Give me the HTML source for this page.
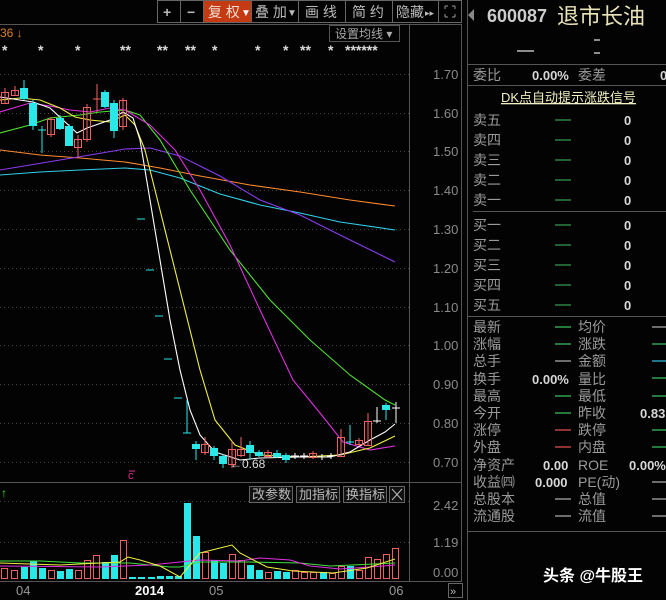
<!DOCTYPE html>
<html><head><meta charset="utf-8"><style>
html,body{margin:0;padding:0;background:#000;width:666px;height:600px;overflow:hidden}
svg{display:block}
text{font-family:"Liberation Sans","Noto Sans CJK SC",sans-serif}
.cj{font-family:"Liberation Sans","Noto Sans CJK SC",sans-serif;font-size:14px;fill:#9a9a9a}
.ax{font-size:13px;fill:#8a8a8a}
.bv{font-size:13px;fill:#d8d8d8;font-weight:bold}
</style></head><body>
<svg width="666" height="600" viewBox="0 0 666 600" xmlns="http://www.w3.org/2000/svg">
<rect width="666" height="600" fill="#030303"/>
<g stroke="#666" fill="none">
<rect x="157.5" y="0.5" width="304" height="22"/>
<line x1="180.5" y1="0" x2="180.5" y2="22"/><line x1="203.5" y1="0" x2="203.5" y2="22"/>
<line x1="251.5" y1="0" x2="251.5" y2="22"/><line x1="298.5" y1="0" x2="298.5" y2="22"/>
<line x1="345.5" y1="0" x2="345.5" y2="22"/><line x1="392.5" y1="0" x2="392.5" y2="22"/>
<line x1="438.5" y1="0" x2="438.5" y2="22"/>
</g>
<rect x="204" y="1" width="47" height="21" fill="#c43a12"/>
<g font-size="14" fill="#bbb">
<text x="163" y="17" font-weight="bold">+</text><text x="187" y="17" font-weight="bold">−</text>
<text x="208" y="17" class="cj" style="fill:#f0e0d8">复 权</text><text x="241" y="16" fill="#fff" font-size="10">▼</text>
<text x="255" y="17" class="cj" style="fill:#bbb">叠 加</text><text x="287" y="16" font-size="10">▼</text>
<text x="305" y="17" class="cj" style="fill:#bbb">画 线</text>
<text x="352" y="17" class="cj" style="fill:#bbb">简 约</text>
<text x="396" y="17" class="cj" style="fill:#bbb">隐藏</text><text x="425" y="16" font-size="9">▸▸</text>
</g>
<g stroke="#999" fill="none"><path d="M445 6h3M445 6v3M455 6h-3M455 6v3M445 17h3M445 17v-3M455 17h-3M455 17v-3"/></g>
<g stroke="#555" fill="none">
<line x1="0" y1="24.5" x2="462" y2="24.5"/>
<line x1="409.5" y1="24" x2="409.5" y2="582"/>
<line x1="461.5" y1="24" x2="461.5" y2="582"/>
<line x1="0" y1="482.5" x2="462" y2="482.5"/>
<line x1="0" y1="581.5" x2="462" y2="581.5"/>
<line x1="467.5" y1="0" x2="467.5" y2="600"/>
</g>
<text x="0" y="37" font-size="12" fill="#e08020">36 ↓</text>
<rect x="329.5" y="25.5" width="70" height="16" fill="none" stroke="#555"/>
<text x="335" y="38" class="cj" style="font-size:12px;fill:#aaa">设置均线 ▾</text>
<g font-size="14" fill="#ddd" font-weight="bold">
<text x="2" y="55">*</text><text x="38" y="55">*</text><text x="75" y="55">*</text><text x="120" y="55">**</text><text x="157" y="55">**</text><text x="185" y="55">**</text><text x="212" y="55">*</text><text x="255" y="55">*</text><text x="283" y="55">*</text><text x="300" y="55">**</text><text x="328" y="55">*</text><text x="345" y="55">******</text>
</g>
<g stroke="#444" stroke-dasharray="1,3">
<line x1="0" y1="74.5" x2="409" y2="74.5"/><line x1="0" y1="113.5" x2="409" y2="113.5"/><line x1="0" y1="151.5" x2="409" y2="151.5"/><line x1="0" y1="190.5" x2="409" y2="190.5"/><line x1="0" y1="229.5" x2="409" y2="229.5"/><line x1="0" y1="268.5" x2="409" y2="268.5"/><line x1="0" y1="307.5" x2="409" y2="307.5"/><line x1="0" y1="345.5" x2="409" y2="345.5"/><line x1="0" y1="384.5" x2="409" y2="384.5"/><line x1="0" y1="423.5" x2="409" y2="423.5"/><line x1="0" y1="462.5" x2="409" y2="462.5"/>
<line x1="0" y1="501.5" x2="409" y2="501.5"/><line x1="0" y1="542.5" x2="409" y2="542.5"/>
</g>
<g class="ax">
<text x="433" y="79">1.70</text><text x="433" y="118">1.60</text><text x="433" y="156">1.50</text><text x="433" y="195">1.40</text><text x="433" y="234">1.30</text><text x="433" y="273">1.20</text><text x="433" y="312">1.10</text><text x="433" y="350">1.00</text><text x="433" y="389">0.90</text><text x="433" y="428">0.80</text><text x="433" y="467">0.70</text>
<text x="433" y="510">2.42</text><text x="433" y="547">1.19</text><text x="433" y="577">0.00</text>
</g>
<g fill="none" stroke-width="1.1">
<polyline stroke="#ff8a30" points="0,150 40,155 80,158 125,162 160,168 200,176 250,185 300,192 350,200 395,206"/>
<polyline stroke="#30d0e8" points="0,175 40,172 80,170 125,168 150,170 180,178 220,194 260,205 300,213 340,222 395,230"/>
<polyline stroke="#8a3cf0" points="0,170 30,165 60,160 90,155 125,149 150,148 180,156 220,176 260,200 300,215 340,235 395,262"/>
<polyline stroke="#50e030" points="0,133 30,125 50,118 80,115 100,112 125,110 140,115 160,140 190,190 230,250 270,300 310,340 350,375 385,400 395,405"/>
<polyline stroke="#e030e0" points="0,112 30,103 50,106 70,110 90,112 110,108 125,110 150,125 175,150 200,190 230,245 260,310 293,380 320,413 343,442 370,450 395,446"/>
<polyline stroke="#f0f040" points="0,100 20,98 40,100 60,108 75,117 90,120 110,122 125,115 135,125 145,150 160,210 175,270 185,310 200,370 215,420 235,445 260,455 300,457 340,455 370,448 395,436"/>
<polyline stroke="#ffffff" points="0,97 33,102 50,108 77,133 87,128 110,120 123,112 133,118 140,140 150,200 160,260 170,320 180,370 190,410 200,435 215,452 240,460 260,458 300,457 330,457 350,452 370,440 385,432 395,424"/>
</g>
<g stroke="#f06060" fill="none">
<path d="M5 88v15M15 86v10M51 117v20M78 135v22M87 104v38M97 84v28M123 98v32M205 437v18M232 441v27M241 437v20M268 450v8M313 451v8M341 429v27M359 438v8M368 413v32"/>
<rect x="1.5" y="92.5" width="7" height="11"/><rect x="11.5" y="90.5" width="7" height="5"/><rect x="47.5" y="119.5" width="7" height="15"/><rect x="74.5" y="139.5" width="7" height="8"/><rect x="83.5" y="107.5" width="7" height="32"/><rect x="119.5" y="100.5" width="7" height="26"/>
<rect x="201.5" y="444.5" width="7" height="8"/><rect x="228.5" y="449.5" width="7" height="15"/><rect x="237.5" y="449.5" width="7" height="6"/><rect x="264.5" y="452.5" width="7" height="4"/><rect x="309.5" y="453.5" width="7" height="4"/><rect x="337.5" y="437.5" width="7" height="19"/><rect x="355.5" y="440.5" width="7" height="4"/><rect x="364.5" y="421.5" width="7" height="24"/>
<path d="M93 99h8"/>
</g>
<g stroke="#2ae8e8" fill="#2ae8e8">
<path d="M24 80v20M33 100v30M42 126v27M60 115v15M69 124v22M105 90v18M114 100v38M187 400v33M196 441v19M214 446v14M223 454v14M250 441v19M259 450v7M277 450v8M286 453v10M350 425v20M386 403v17" fill="none"/>
<rect x="20.5" y="88.5" width="7" height="10"/><rect x="29.5" y="103.5" width="7" height="22"/><rect x="56.5" y="118.5" width="7" height="10"/><rect x="65.5" y="126.5" width="7" height="19"/><rect x="101.5" y="92.5" width="7" height="14"/><rect x="110.5" y="103.5" width="7" height="27"/>
<rect x="192.5" y="444.5" width="7" height="4"/><rect x="210.5" y="448.5" width="7" height="7"/><rect x="219.5" y="456.5" width="7" height="7"/><rect x="246.5" y="445.5" width="7" height="7"/><rect x="255.5" y="452.5" width="7" height="3"/><rect x="273.5" y="453.5" width="7" height="3"/><rect x="282.5" y="455.5" width="7" height="4"/><rect x="382.5" y="405.5" width="7" height="4"/>
<path d="M38 130h8M137 219h8M146 270h8M155 316h8M164 359h8M174 398h8M183 433h8M346 442h8" fill="none"/>
</g>
<g stroke="#fff" fill="none"><path d="M291 456h8M295 453v6M300 456h8M304 453v6M318 457h8M322 454v6M327 456h8M331 453v6M373 421h8M377 407v16M392 408h8M396 402v21"/></g>
<text x="230" y="468" font-size="12" fill="#ddd">←0.68</text>
<text x="128" y="479" font-size="11" fill="#e03090">c</text><path d="M129 471h6" stroke="#e03090"/>
<g stroke="#666" fill="#111"><rect x="249.5" y="486.5" width="43" height="16"/><rect x="296.5" y="486.5" width="43" height="16"/><rect x="343.5" y="486.5" width="43" height="16"/><rect x="389.5" y="486.5" width="15" height="16"/></g>
<g class="cj" style="font-size:13px;fill:#bbb"><text x="252" y="499">改参数</text><text x="299" y="499">加指标</text><text x="346" y="499">换指标</text></g>
<path d="M392 489l10 11M402 489l-10 11" stroke="#bbb"/>
<text x="1" y="497" font-size="12" fill="#30e030">↑</text>
<g stroke="#f06060" fill="none">
<rect x="1.5" y="568.5" width="6" height="10"/><rect x="11.5" y="570.5" width="6" height="8"/><rect x="48.5" y="570.5" width="6" height="8"/><rect x="75.5" y="570.5" width="6" height="8"/><rect x="84.5" y="560.5" width="6" height="18"/><rect x="93.5" y="555.5" width="6" height="23"/><rect x="120.5" y="540.5" width="6" height="38"/><rect x="202.5" y="552.5" width="6" height="26"/><rect x="229.5" y="554.5" width="6" height="24"/><rect x="238.5" y="560.5" width="6" height="18"/><rect x="265.5" y="572.5" width="6" height="6"/><rect x="292.5" y="570.5" width="6" height="8"/><rect x="301.5" y="572.5" width="6" height="6"/><rect x="310.5" y="572.5" width="6" height="6"/><rect x="329.5" y="573.5" width="6" height="5"/><rect x="338.5" y="566.5" width="6" height="12"/><rect x="356.5" y="570.5" width="6" height="8"/><rect x="365.5" y="557.5" width="6" height="21"/><rect x="374.5" y="559.5" width="6" height="19"/><rect x="383.5" y="554.5" width="6" height="24"/><rect x="392.5" y="548.5" width="6" height="30"/>
</g>
<g fill="#2ae8e8">
<rect x="21" y="567" width="7" height="12"/><rect x="30" y="561" width="7" height="18"/><rect x="39" y="568" width="7" height="11"/><rect x="57" y="571" width="7" height="8"/><rect x="66" y="569" width="7" height="10"/><rect x="102" y="562" width="7" height="17"/><rect x="111" y="555" width="7" height="24"/><rect x="129" y="577" width="7" height="2"/><rect x="138" y="577" width="7" height="2"/><rect x="148" y="577" width="7" height="2"/><rect x="157" y="576" width="7" height="3"/><rect x="166" y="576" width="7" height="3"/><rect x="175" y="576" width="7" height="3"/><rect x="184" y="503" width="7" height="76"/><rect x="193" y="536" width="7" height="43"/><rect x="211" y="560" width="7" height="19"/><rect x="220" y="563" width="7" height="16"/><rect x="247" y="565" width="7" height="14"/><rect x="256" y="570" width="7" height="9"/><rect x="274" y="571" width="7" height="8"/><rect x="283" y="572" width="7" height="7"/><rect x="320" y="572" width="7" height="7"/><rect x="347" y="566" width="7" height="13"/>
</g>
<g fill="none" stroke-width="1">
<polyline stroke="#40e040" points="0,561 40,561 80,563 130,563 170,567 180,567 200,562 250,562 300,563 330,566 395,563"/>
<polyline stroke="#e030e0" points="0,566 100,567 150,565 180,562 200,560 240,561 260,558 290,560 310,566 340,569 370,567 395,565"/>
<polyline stroke="#f0f040" points="0,563 60,565 120,562 128,557 140,560 160,566 180,577 200,553 232,545 240,553 267,567 293,571 333,573 367,568 395,559"/>
</g>
<g font-size="13" fill="#999"><text x="16" y="595">04</text><text x="135" y="595" fill="#fff" font-weight="bold">2014</text><text x="209" y="595">05</text><text x="389" y="595">06</text></g>
<rect x="448.5" y="583.5" width="14" height="14" fill="none" stroke="#666"/><text x="450" y="595" font-size="11" fill="#bbb">»</text>
<path d="M474 9v12l-6-6z" fill="#888"/>
<text x="487" y="22" font-size="18" font-weight="bold" fill="#ccc">600087</text>
<text x="557" y="24" class="cj" style="font-size:22px;fill:#e8e2b8">退市长油</text>
<path d="M517 51h17M594 40h6M594 53h6" stroke="#ddd" stroke-width="1.3"/>
<g stroke="#555"><line x1="468" y1="64.5" x2="666" y2="64.5"/><line x1="468" y1="85.5" x2="666" y2="85.5"/><line x1="473" y1="211.5" x2="666" y2="211.5"/><line x1="468" y1="316.5" x2="666" y2="316.5"/><line x1="468" y1="531.5" x2="666" y2="531.5"/></g>
<text x="473" y="80" class="cj">委比</text><text x="532" y="80" class="bv">0.00%</text><text x="578" y="80" class="cj">委差</text><text x="660" y="80" class="bv">0</text>
<text x="501" y="102" class="cj" style="font-size:13px;fill:#f0f0c0;text-decoration:underline">DK点自动提示涨跌信号</text>
<g class="cj"><text x="473" y="125">卖五</text><text x="473" y="145">卖四</text><text x="473" y="165">卖三</text><text x="473" y="185">卖二</text><text x="473" y="205">卖一</text><text x="473" y="230">买一</text><text x="473" y="250">买二</text><text x="473" y="270">买三</text><text x="473" y="290">买四</text><text x="473" y="310">买五</text></g>
<g stroke="#3cc060"><path d="M555 120h16M555 140h16M555 160h16M555 180h16M555 200h16M555 225h16M555 245h16M555 265h16M555 285h16M555 305h16"/></g>
<g class="bv"><text x="624" y="125">0</text><text x="624" y="145">0</text><text x="624" y="165">0</text><text x="624" y="185">0</text><text x="624" y="205">0</text><text x="624" y="230">0</text><text x="624" y="250">0</text><text x="624" y="270">0</text><text x="624" y="290">0</text><text x="624" y="310">0</text></g>
<g class="cj"><text x="473" y="332">最新</text><text x="473" y="349">涨幅</text><text x="473" y="366">总手</text><text x="473" y="384">换手</text><text x="473" y="401">最高</text><text x="473" y="418">今开</text><text x="473" y="435">涨停</text><text x="473" y="452">外盘</text><text x="473" y="470">净资产</text><text x="473" y="487">收益㈣</text><text x="473" y="504">总股本</text><text x="473" y="521">流通股</text>
<text x="578" y="332">均价</text><text x="578" y="349">涨跌</text><text x="578" y="366">金额</text><text x="578" y="384">量比</text><text x="578" y="401">最低</text><text x="578" y="418">昨收</text><text x="578" y="435">跌停</text><text x="578" y="452">内盘</text><text x="578" y="470">ROE</text><text x="578" y="487">PE(动)</text><text x="578" y="504">总值</text><text x="578" y="521">流值</text></g>
<g stroke-width="1.2">
<path d="M555 327h16M555 344h16M555 396h16M555 413h16" stroke="#3cc060"/>
<path d="M555 361h16M555 499h16M555 516h16" stroke="#aaa"/>
<path d="M555 430h16M555 447h16" stroke="#e05050"/>
<path d="M652 327h14M652 482h14M652 499h14M652 516h14" stroke="#aaa"/>
<path d="M652 344h14M652 378h14M652 396h14M652 430h14M652 447h14" stroke="#3cc060"/>
<path d="M652 361h14" stroke="#30c0e0"/>
</g>
<g class="bv"><text x="532" y="384">0.00%</text><text x="543" y="470">0.00</text><text x="535" y="487">0.000</text><text x="640" y="418">0.83</text><text x="629" y="470">0.00%</text></g>
<text x="543" y="581" font-size="16" font-weight="bold" fill="#fff" style="font-family:'Liberation Sans','Noto Sans CJK SC',sans-serif">头条 @牛股王</text>
</svg>
</body></html>
